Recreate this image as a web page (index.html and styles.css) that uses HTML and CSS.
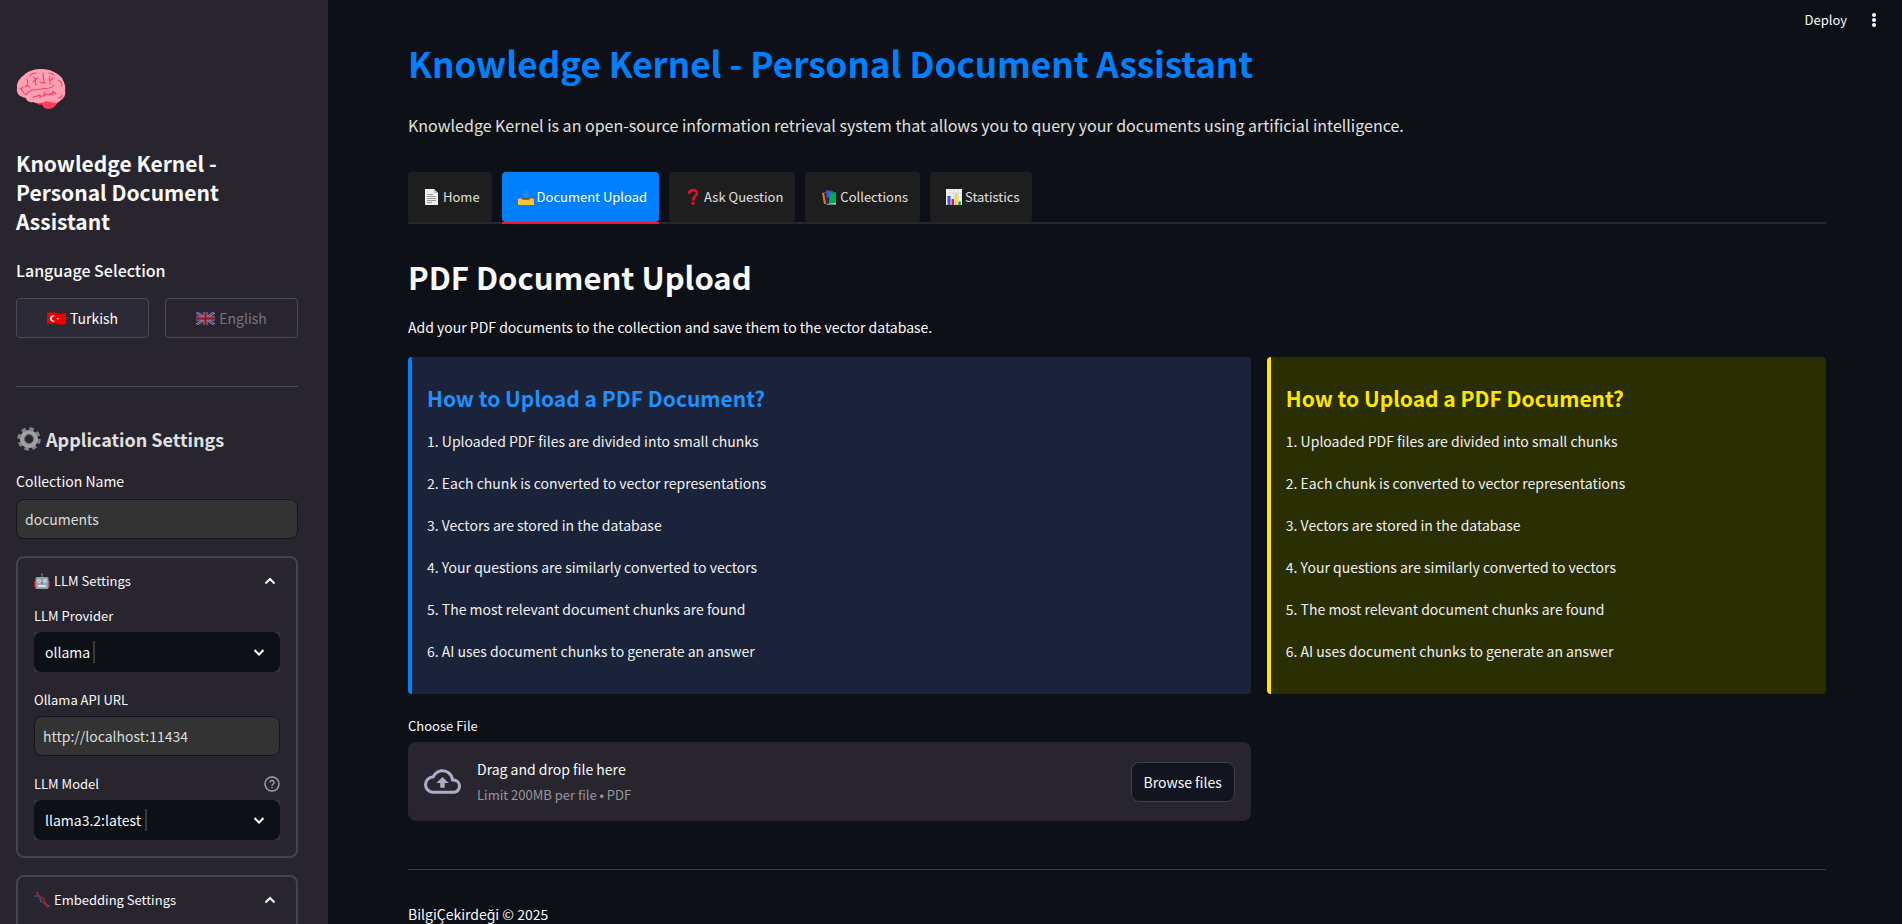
FILE: index.html
```html
<!DOCTYPE html>
<html lang="en">
<head>
<meta charset="utf-8">
<title>Knowledge Kernel</title>
<link rel="stylesheet" href="styles.css">
</head>
<body>
<div class="app">
  <aside class="sidebar">
    <svg class="brain" viewBox="0 0 50 42" aria-hidden="true">
      <path fill="#ff0f35" d="M19 33l12-3 13 2-4 5H23z"/>
      <path fill="#ff3d62" d="M26 35c5-4 10-3 16-2-2 5-5 8-10 8-3 0-6-3-6-6z"/>
      <path fill="#ffa0b5" d="M1 20C0 14 5 9 8 7 13 2 20 1 26 1c8 0 16 4 20 9 2 4 4 8 3 13 1 4-1 7-4 9-4 5-10 2-15 1-4 3-9 3-13 1-4 1-7-2-7-4C4 29 0 26 1 20z"/>
      <g fill="none" stroke="#ff3d62" stroke-width="1.1" stroke-linecap="round">
        <path d="M4 20c3 2 2 4 5 6M7 19l-2 2M11 11c1 2 0 4 1 7l2 1M12 17l-3 2M18 9c3 2 0 5 2 8M17 14l3-3 2-1M27 5c0 5 2 7 0 10M27 15l-3-1M27 15h3M34 9c-2 3 1 4 0 7M34 13l3-3M14 8c1-2 3-3 6-3M33 5c3 0 4 1 5 2M42 12c3 1 4 4 4 6M10 27c2-6 10-5 15-6 5-1 9 1 13-4M17 29c2-1 4 0 6-2 2 2 5 1 7-1 2 1 5 1 8-2l2 2M28 24l1 4M24 28v2M37 23v4M42 30c2 0 4-1 4-3"/>
      </g>
    </svg>
    <h2 class="brand">Knowledge Kernel - Personal Document Assistant</h2>
    <h4 class="group-title">Language Selection</h4>
    <div class="languages">
      <button class="button lang" type="button">
        <svg class="flag" viewBox="0 0 19 13" aria-hidden="true">
          <path fill="#f00000" d="M0 1q5-1.500 9.500 0T19 1v11q-5 1.500-9.500 0T0 12z"/>
          <path fill="#fff" d="M8.300 4.500a3 3 0 1 0 0 4 2.300 2.300 0 1 1 0-4zM9.500 6.500l2-.8-.2 2z"/>
        </svg>
        <span>Turkish</span>
      </button>
      <button class="button lang" type="button" disabled>
        <svg class="flag" viewBox="0 0 19 13" aria-hidden="true">
          <path fill="#1c2a8c" d="M0 0h19v13H0z"/>
          <path stroke="#ddd" stroke-width="2.400" d="M0 0l19 13M19 0L0 13"/>
          <path stroke="#d01030" stroke-width="1" d="M0 0l19 13M19 0L0 13"/>
          <path stroke="#ddd" stroke-width="4" d="M9.500 0v13M0 6.500h19"/>
          <path stroke="#d01030" stroke-width="2.400" d="M9.500 0v13M0 6.500h19"/>
        </svg>
        <span>English</span>
      </button>
    </div>
    <hr class="side-rule">
    <h3 class="settings-title">
      <svg class="gear" viewBox="0 0 24 24" aria-hidden="true">
        <circle cx="12" cy="12" r="10.200" fill="none" stroke="#858585" stroke-width="3" stroke-dasharray="4.500 3.510"/>
        <circle cx="12" cy="12" r="6.800" fill="none" stroke="#a0a0a0" stroke-width="4.600"/>
        <circle cx="12" cy="12" r="4.200" fill="none" stroke="#555" stroke-width="1"/>
      </svg>
      Application Settings
    </h3>
    <label class="label label-large" for="collection">Collection Name</label>
    <input class="text-input" id="collection" type="text" value="documents">

    <details class="expander" open>
      <summary>
        <svg class="emoji" viewBox="0 0 16 16" aria-hidden="true">
          <path stroke="#777" d="M8 1v4"/><circle cx="8" cy="1.200" r="1" fill="#9c5558"/>
          <path fill="#e01020" d="M0 8h2v6H0zM14 8h2v6h-2z"/>
          <rect x="1.500" y="4" width="13" height="12" rx="1.500" fill="#8ca4ae"/>
          <circle cx="5" cy="8" r="1.700" fill="#fff"/><circle cx="11" cy="8" r="1.700" fill="#fff"/>
          <circle cx="5" cy="8" r=".7" fill="#345"/><circle cx="11" cy="8" r=".7" fill="#345"/>
          <path fill="#e33" d="M7 10.500l1-1.500 1 1.500z"/><path fill="#dde" d="M4 12h8v2H4z"/>
        </svg>
        <span class="summary-text">LLM Settings</span>
        <svg class="chevron" viewBox="0 0 12 12" aria-hidden="true"><path d="M1.500 8.500L6 4l4.500 4.500"/></svg>
      </summary>
      <div class="expander-body">
        <div class="field">
          <label class="label" for="provider">LLM Provider</label>
          <div class="combo">
            <select id="provider"><option>ollama</option></select>
            <span class="caret caret-short"></span>
            <svg class="chevron combo-arrow" viewBox="0 0 12 12" aria-hidden="true"><path d="M1.500 4L6 8.500 10.500 4"/></svg>
          </div>
        </div>
        <div class="field">
          <label class="label" for="api">Ollama API URL</label>
          <input class="text-input" id="api" type="text" value="http://localhost:11434">
        </div>
        <div class="field">
          <div class="label-row">
            <label class="label" for="model">LLM Model</label>
            <svg class="help" viewBox="0 0 16 16" aria-hidden="true"><circle cx="8" cy="8" r="7"/><path d="M6 6.500a2 2 0 1 1 3 1.700c-.8.400-1 .8-1 1.500M8 11v1.300"/></svg>
          </div>
          <div class="combo">
            <select id="model"><option>llama3.2:latest</option></select>
            <span class="caret caret-long"></span>
            <svg class="chevron combo-arrow" viewBox="0 0 12 12" aria-hidden="true"><path d="M1.500 4L6 8.500 10.500 4"/></svg>
          </div>
        </div>
      </div>
    </details>

    <details class="expander" open>
      <summary>
        <svg class="emoji" viewBox="0 0 16 16" aria-hidden="true" fill="none">
          <path stroke="#2862a8" stroke-width="1.300" d="M0 4c3 1 5-2 6 1s-1 4 2 5 3-1 4 2 2 3 4 1"/>
          <path stroke="#b01c1c" stroke-width="1.500" d="M3 0c1 3 0 4 2 5s4-1 5 2-1 4 1 5 2 1 3 4"/>
          <path stroke="#823040" d="M2 2l3-1M7 8l3-2M11 14l3-2"/>
        </svg>
        <span class="summary-text">Embedding Settings</span>
        <svg class="chevron" viewBox="0 0 12 12" aria-hidden="true"><path d="M1.500 8.500L6 4l4.500 4.500"/></svg>
      </summary>
      <div class="expander-body"></div>
    </details>
  </aside>

  <main class="main">
    <header class="toolbar">
      <button class="plain" type="button">Deploy</button>
      <button class="plain" type="button" aria-label="Menu">
        <svg class="dots" viewBox="0 0 4 14" aria-hidden="true"><circle cx="2" cy="2" r="2"/><circle cx="2" cy="7" r="2"/><circle cx="2" cy="12" r="2"/></svg>
      </button>
    </header>
    <h1 class="title">Knowledge Kernel - Personal Document Assistant</h1>
    <p class="intro">Knowledge Kernel is an open-source information retrieval system that allows you to query your documents using artificial intelligence.</p>

    <div class="tabs" role="tablist">
      <button class="tab" type="button" role="tab">
        <svg class="emoji" viewBox="0 0 16 16" aria-hidden="true"><path fill="#eee" d="M1 0h9l4 4v12H1z"/><path fill="#bbb" d="M10 0v4h4z"/><path stroke="#999" d="M3 5.500h6M3 7.500h9M3 9.500h9M3 11.500h9M3 13.500h5"/></svg>
        <span>Home</span>
      </button>
      <button class="tab tab-active" type="button" role="tab" aria-selected="true">
        <svg class="emoji" viewBox="0 0 16 16" aria-hidden="true"><path fill="#1d8be8" d="M6 1h4v4h3L8 9.500 3 5h3z"/><path fill="#d58a20" d="M1 9h14v2H1z"/><path fill="#555" d="M4 9h8v1.500H4z"/><path fill="#ffc33a" d="M0 10h4l1 1h6l1-1h4v6H0z"/></svg>
        <span>Document Upload</span>
      </button>
      <button class="tab" type="button" role="tab">
        <svg class="emoji" viewBox="0 0 16 16" aria-hidden="true"><path fill="none" stroke="#f00b28" stroke-width="2.600" d="M4 5c0-5 8-5 8-1 0 3-4 3-4 7.500"/><circle cx="8" cy="14.300" r="1.600" fill="#f00b28"/></svg>
        <span>Ask Question</span>
      </button>
      <button class="tab" type="button" role="tab">
        <svg class="emoji" viewBox="0 0 16 16" aria-hidden="true"><path fill="#e87510" d="M1 4l4-1 1 12H3z"/><path fill="#223060" d="M3 4l3-1 2 11-3 1z"/><path fill="#4650d5" d="M5 1l7 1v5l-6 2z"/><path fill="#00a85a" d="M8 4l7-1v11l-7 1z"/><path fill="#d8e8e0" d="M5 15l10-1v1.500H6z"/></svg>
        <span>Collections</span>
      </button>
      <button class="tab" type="button" role="tab">
        <svg class="emoji" viewBox="0 0 16 16" aria-hidden="true"><path fill="#f2f2f2" d="M0 0h16v16H0z"/><path stroke="#ccc" stroke-width=".6" d="M0 4h16M0 8h16M0 12h16M4 0v16M8 0v16M12 0v16"/><path fill="#4650d5" d="M1.500 7h3v9h-3z"/><path fill="#f21515" d="M5.500 10h2.500v6H5.500z"/><path fill="#fadb15" d="M9 4h2.500v12H9z"/><path fill="#00a85a" d="M12.300 12.500h2.500V16h-2.500z"/></svg>
        <span>Statistics</span>
      </button>
    </div>

    <h2 class="section-title">PDF Document Upload</h2>
    <p class="lead">Add your PDF documents to the collection and save them to the vector database.</p>

    <div class="columns">
      <section class="column wide">
        <div class="note note-blue">
          <h3>How to Upload a PDF Document?</h3>
          <p>1. Uploaded PDF files are divided into small chunks</p>
          <p>2. Each chunk is converted to vector representations</p>
          <p>3. Vectors are stored in the database</p>
          <p>4. Your questions are similarly converted to vectors</p>
          <p>5. The most relevant document chunks are found</p>
          <p>6. AI uses document chunks to generate an answer</p>
        </div>
        <label class="label choose" for="browse">Choose File</label>
        <div class="dropzone">
          <svg class="cloud" viewBox="0 0 24 24" aria-hidden="true"><path d="M19.350 10.040A7.490 7.490 0 0 0 12 4C9.110 4 6.600 5.640 5.350 8.040A5.994 5.994 0 0 0 0 14c0 3.310 2.690 6 6 6h13c2.760 0 5-2.240 5-5 0-2.640-2.050-4.780-4.650-4.960zM19 18H6c-2.210 0-4-1.790-4-4 0-2.050 1.530-3.760 3.560-3.970l1.070-.11.5-.95A5.469 5.469 0 0 1 12 6c2.620 0 4.880 1.860 5.390 4.430l.3 1.500 1.530.11A2.980 2.980 0 0 1 22 15c0 1.650-1.350 3-3 3zM8 13h2.550v3h2.900v-3H16l-4-4z"/></svg>
          <div class="drop-text">
            <span>Drag and drop file here</span>
            <small>Limit 200MB per file • PDF</small>
          </div>
          <button class="button browse" id="browse" type="button">Browse files</button>
        </div>
      </section>
      <section class="column narrow">
        <div class="note note-yellow">
          <h3>How to Upload a PDF Document?</h3>
          <p>1. Uploaded PDF files are divided into small chunks</p>
          <p>2. Each chunk is converted to vector representations</p>
          <p>3. Vectors are stored in the database</p>
          <p>4. Your questions are similarly converted to vectors</p>
          <p>5. The most relevant document chunks are found</p>
          <p>6. AI uses document chunks to generate an answer</p>
        </div>
      </section>
    </div>

    <hr class="main-rule">
    <footer class="footer">BilgiÇekirdeği © 2025</footer>
  </main>
</div>
</body>
</html>
```
FILE: styles.css
```css
* {
  box-sizing: border-box;
}

body {
  margin: 0;
  background: #0d1017;
  color: #fafafa;
  font: 14px/26px "Noto Sans CJK JP", "Noto Sans", sans-serif;
}

h1, h2, h3, h4, p {
  margin: 0;
}

button, input, select {
  font: inherit;
  color: inherit;
}

.app {
  display: flex;
  height: 100vh;
  overflow: hidden;
}

/* Sidebar */

.sidebar {
  flex: 0 0 328px;
  display: flex;
  flex-direction: column;
  padding: 68px 30px 0 16px;
  background: #28252f;
  overflow: hidden;
}

.sidebar > * {
  flex-shrink: 0;
}

.brain {
  width: 50px;
  height: 42px;
}

.brand {
  margin-top: 39px;
  font-size: 21px;
  line-height: 29px;
}

.group-title {
  margin-top: 22px;
  font-size: 16px;
  font-weight: 500;
  line-height: 24px;
}

.languages {
  display: flex;
  gap: 16px;
  margin-top: 16px;
}

.button {
  display: flex;
  align-items: center;
  justify-content: center;
  gap: 4px;
  height: 40px;
  padding: 0 12px;
  border: 1px solid #4b4b57;
  border-radius: 4px;
  background: #2b2a35;
}

.lang {
  flex: 1;
}

.lang:disabled {
  background: transparent;
  color: #77757d;
}

.lang:disabled .flag {
  opacity: 0.6;
}

.flag {
  width: 19px;
  height: 13px;
}

.side-rule, .main-rule {
  width: 100%;
  height: 1px;
  border: 0;
  background: #4b4952;
}

.side-rule {
  margin: 48px 0 0;
}

.settings-title {
  display: flex;
  align-items: center;
  gap: 4px;
  margin-top: 40px;
  color: #e0e0e0;
  font-size: 18px;
  line-height: 24px;
}

.gear {
  width: 26px;
  height: 24px;
}

.label {
  display: block;
  font-size: 13px;
  line-height: 24px;
}

.label-large {
  margin-top: 18px;
  font-size: 14px;
}

.text-input {
  display: block;
  width: 100%;
  height: 40px;
  padding: 0 8px;
  border: 1px solid #14151c;
  border-radius: 8px;
  background: #333;
  color: #ddd;
}

.label-large + .text-input {
  margin-top: 6px;
}

.expander {
  margin-top: 17px;
  padding: 0 16px 16px;
  border: 2px solid #45434c;
  border-radius: 8px;
}

.expander summary {
  display: flex;
  align-items: center;
  gap: 4px;
  height: 46px;
  font-size: 13px;
  list-style: none;
}

.summary-text {
  flex: 1;
}

.emoji {
  flex: none;
  width: 16px;
  height: 16px;
}

.chevron {
  width: 12px;
  height: 12px;
  margin-right: 4px;
  fill: none;
  stroke: #fafafa;
  stroke-width: 2;
}

.expander-body {
  display: grid;
  gap: 16px;
}

.field {
  display: grid;
  gap: 4px;
}

.label-row {
  display: flex;
  align-items: center;
  justify-content: space-between;
}

.help {
  width: 16px;
  height: 16px;
  fill: none;
  stroke: #a5a4a9;
  stroke-width: 1.4;
}

.combo {
  position: relative;
  background: #333;
}

.combo select {
  display: block;
  width: 100%;
  height: 40px;
  padding: 0 11px;
  border: 0;
  border-radius: 8px;
  background: #0d1017;
  appearance: none;
}

.combo-arrow {
  position: absolute;
  top: 14px;
  right: 11px;
}

.caret {
  position: absolute;
  top: 9px;
  width: 2px;
  height: 22px;
  background: #3a3a3a;
}

.caret-short {
  left: 59px;
}

.caret-long {
  left: 111px;
}

/* Main area */

.main {
  flex: 1;
  min-width: 0;
  padding: 0 76px 0 80px;
}

.toolbar {
  display: flex;
  justify-content: flex-end;
  align-items: center;
  gap: 25px;
  height: 40px;
  margin-right: -50px;
}

.plain {
  display: flex;
  padding: 0;
  border: 0;
  background: none;
  font-size: 13px;
}

.dots {
  width: 4px;
  height: 14px;
  fill: #fafafa;
}

.title {
  color: #0080ff;
  font-size: 35px;
  line-height: 46px;
}

.intro {
  margin-top: 25px;
  color: #e0e0e0;
  font-size: 16px;
  line-height: 28px;
}

.tabs {
  display: flex;
  gap: 10px;
  margin-top: 33px;
  border-bottom: 2px solid #262730;
}

.tab {
  position: relative;
  display: flex;
  align-items: center;
  gap: 3px;
  height: 50px;
  padding: 0 12px 0 16px;
  border: 0;
  border-radius: 4px;
  background: #1e1e1e;
  color: #e0e0e0;
  font-size: 13px;
}

.tab-active {
  background: #0080ff;
  color: #fff;
}

.tab-active::after {
  content: "";
  position: absolute;
  right: 0;
  bottom: -2px;
  left: 0;
  height: 2px;
  background: #ff0f2f;
}

.section-title {
  margin-top: 32px;
  font-size: 31px;
  line-height: 42px;
}

.lead {
  margin-top: 16px;
}

.columns {
  display: flex;
  gap: 16px;
  margin-top: 17px;
}

.wide {
  flex: 1 1 calc(60% - 16px);
}

.narrow {
  flex: 1 1 calc(40% - 16px);
}

.note {
  display: grid;
  gap: 16px;
  padding: 27px 15px 30px;
  border-left: 4px solid;
  border-radius: 4px;
}

.note h3 {
  font-size: 21px;
  line-height: 28px;
}

.note p {
  color: #f0f0f0;
}

.note-blue {
  border-color: #0080ff;
  background: #1a233a;
}

.note-blue h3 {
  color: #1e90ff;
}

.note-yellow {
  border-color: #ffe600;
  background: #2a2e03;
}

.note-yellow h3 {
  color: #ffe600;
}

.choose {
  margin-top: 20px;
}

.dropzone {
  display: flex;
  align-items: center;
  gap: 16px;
  margin-top: 4px;
  padding: 14px 16px;
  border-radius: 8px;
  background: #28252f;
}

.cloud {
  width: 37px;
  height: 37px;
  fill: #adadc9;
}

.drop-text {
  flex: 1;
  display: grid;
}

.drop-text small {
  color: #99979e;
  font-size: 13px;
  line-height: 25px;
}

.browse {
  border-color: #40414c;
  border-radius: 8px;
  background: #12151f;
}

.main-rule {
  margin: 48px 0 32px;
  background: #3c3e43;
}

.footer {
  line-height: 24px;
}
```
